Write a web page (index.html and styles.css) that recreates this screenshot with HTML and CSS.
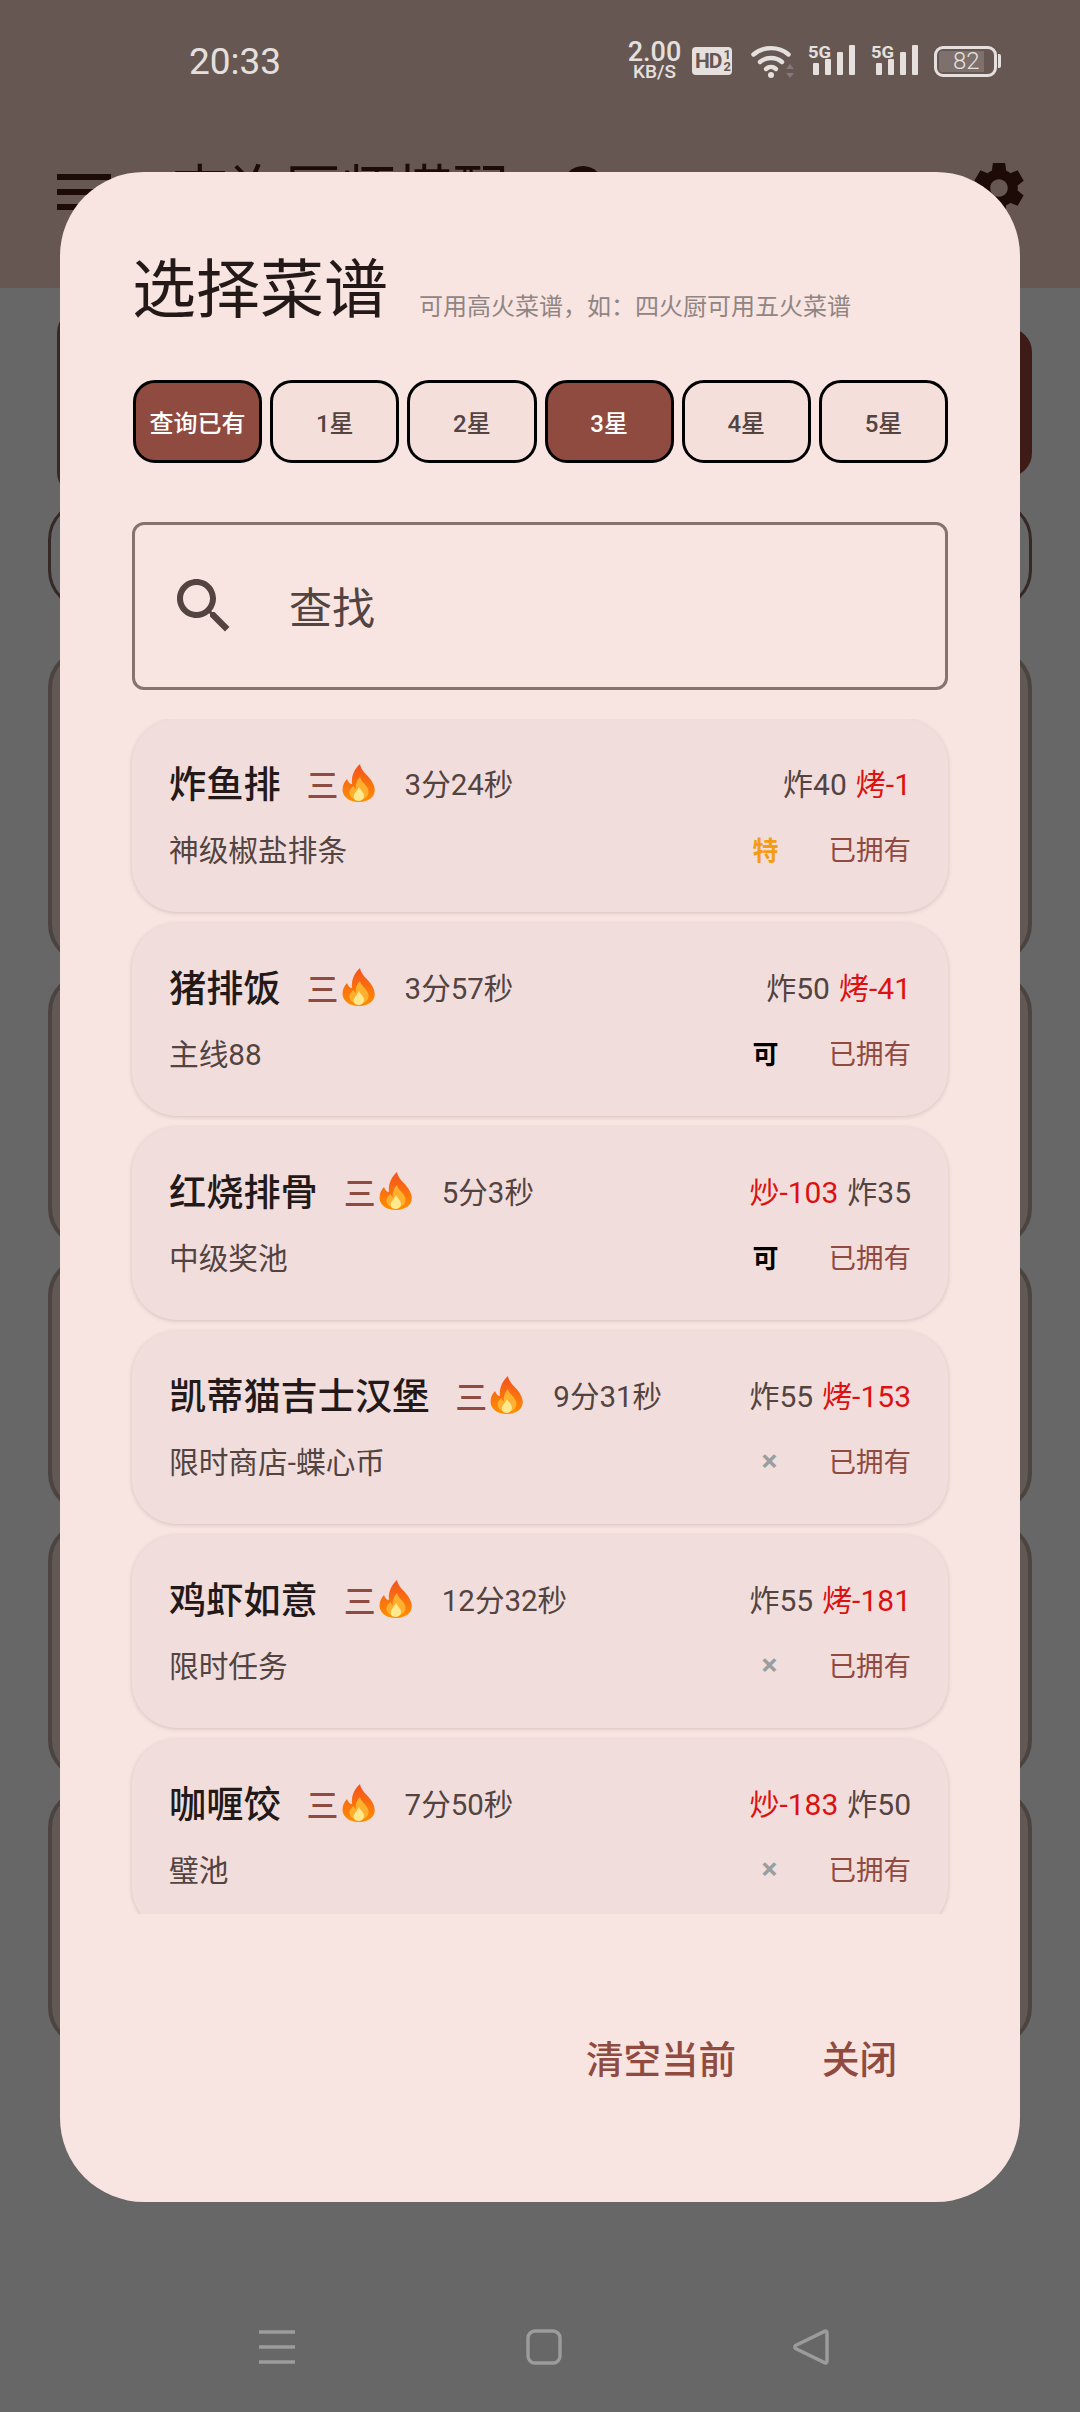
FILE: index.html
```html
<!DOCTYPE html>
<html lang="zh-CN">
<head>
  <meta charset="utf-8">
  <title>选择菜谱</title>
  <link rel="stylesheet" href="styles.css">
</head>
<body>

  <svg class="defs" width="0" height="0">
    <defs>
      <linearGradient id="flameOuter" x1="0" y1="0" x2="0" y2="1">
        <stop offset="0" stop-color="#f4511e"/>
        <stop offset="1" stop-color="#ff8f00"/>
      </linearGradient>
      <symbol id="flame" viewBox="0 0 34 38">
        <path fill="url(#flameOuter)" d="M18 0C19 7 25 10 29 16C33 22 34 27 31 32C28 36 22 38 17 38C11 38 5 36 2 31C-1 26 1 19 5 15C6 18 8 20 10 20C9 13 12 5 18 0Z"/>
        <path fill="#ffb02e" d="M18 13C19 18 24 20 26 25C28 30 24 36 17 36C10 36 6 31 8 26C9 24 10 23 12 22C12 24 13 25 14 25C13 21 15 16 18 13Z"/>
        <path fill="#ffe98f" d="M17 23C18 26 22 28 22 32C22 35 19 37 16.5 37C13 37 11 34 12 31C13 28 16 26 17 23Z"/>
      </symbol>
      <symbol id="signal" viewBox="0 0 48 34">
        <text x="0" y="13.5" font-family="Roboto" font-weight="700" font-size="17" textLength="23" lengthAdjust="spacingAndGlyphs" fill="#e5e0de">5G</text>
        <rect x="5" y="19" width="6" height="12" rx="1" fill="#e5e0de"/>
        <rect x="17" y="15" width="6" height="16" rx="1" fill="#e5e0de"/>
        <rect x="29" y="8" width="6" height="23" rx="1" fill="#e5e0de"/>
        <rect x="41" y="1" width="6" height="30" rx="1" fill="#e5e0de"/>
      </symbol>
    </defs>
  </svg>

  <div class="app">
    <header class="app-header">
      <div class="status-bar">
        <span class="clock">20:33</span>
        <div class="status-icons">
          <div class="net-speed"><span class="net-num">2.00</span><span class="net-unit">KB/S</span></div>
          <div class="hd-badge"><span>HD</span><span class="hd-frac">1<br>2</span></div>
          <svg class="wifi" viewBox="0 0 44 36" width="44" height="36">
            <g fill="none" stroke="#e5e0de" stroke-width="4.4" stroke-linecap="round">
              <path d="M2.5 11.5C12 3 28 3 37.5 11.5"/>
              <path d="M9 19C15 13.6 25 13.6 31 19"/>
              <path d="M15 26C18 23.4 22 23.4 25 26"/>
            </g>
            <circle cx="20" cy="32" r="3" fill="#e5e0de"/>
            <path d="M39 21l4 5h-8zM39 35l4-5h-8z" fill="#85797a"/>
          </svg>
          <svg class="signal" width="48" height="34"><use href="#signal"/></svg>
          <svg class="signal" width="48" height="34"><use href="#signal"/></svg>
          <div class="battery">
            <div class="battery-body"><span class="battery-level">82</span></div>
            <div class="battery-nub"></div>
          </div>
        </div>
      </div>
      <div class="title-bar">
        <svg class="menu-icon" viewBox="0 0 24 24" width="72" height="72"><path d="M3 18h18v-2H3v2zm0-5h18v-2H3v2zm0-5h18V6H3v2z"/></svg>
        <span class="app-title">查询厨师搭配</span>
        <span class="help-dot"></span>
        <svg class="gear-icon" viewBox="0 0 24 24" width="60" height="60"><path d="M19.44 12.99l-.01.02c.04-.33.08-.67.08-1.01 0-.34-.03-.66-.07-.99l.01.02 2.44-1.92-2.43-4.22-2.87 1.16.01.01c-.52-.4-1.09-.74-1.71-1h.01L14.44 2H9.57l-.44 3.07h.01c-.62.26-1.19.6-1.71 1l.01-.01-2.88-1.17-2.44 4.22 2.44 1.92.01-.02c-.04.33-.07.65-.07.99 0 .34.03.68.08 1.01l-.01-.02-2.1 1.65-.33.26 2.43 4.2 2.88-1.15-.02-.04c.53.41 1.1.75 1.73 1.01h-.03L9.58 22h4.85s.03-.18.06-.42l.38-2.65h-.01c.62-.26 1.2-.6 1.73-1.01l-.02.04 2.88 1.15 2.43-4.2s-.14-.12-.33-.26l-2.11-1.66zM12 15.5c-1.93 0-3.5-1.57-3.5-3.5s1.57-3.5 3.5-3.5 3.5 1.57 3.5 3.5-1.57 3.5-3.5 3.5z"/></svg>
      </div>
    </header>

    <!-- page behind the dialog, only its edges show -->
    <main class="behind">
      <div class="behind-top">
        <div class="behind-outline-btn"></div>
        <div class="behind-solid"></div>
      </div>
      <div class="behind-outline"></div>
      <div class="behind-card h316"></div>
      <div class="behind-card h276"></div>
      <div class="behind-card h257"></div>
      <div class="behind-card h259"></div>
      <div class="behind-card h259"></div>
    </main>

    <nav class="nav-bar">
      <svg viewBox="0 0 40 36" width="40" height="36"><path d="M2 3h36M2 18h36M2 33h36" fill="none" stroke="#9c9c9c" stroke-width="3.4"/></svg>
      <svg viewBox="0 0 40 36" width="40" height="36"><rect x="4" y="2" width="32" height="32" rx="7" fill="none" stroke="#9c9c9c" stroke-width="3.4"/></svg>
      <svg viewBox="0 0 40 36" width="40" height="36"><path d="M36 3.5v29a1.5 1.5 0 0 1-2.500 1.100L4.500 19.500a2 2 0 0 1 0-3L33.500 2.400A1.500 1.500 0 0 1 36 3.500z" fill="none" stroke="#9c9c9c" stroke-width="3.400" stroke-linejoin="round"/></svg>
    </nav>

    <section class="dialog">
      <div class="dialog-head">
        <h1 class="dialog-title">选择菜谱</h1>
        <span class="dialog-hint">可用高火菜谱，如：四火厨可用五火菜谱</span>
      </div>

      <div class="chips">
        <button class="chip chip-on">查询已有</button>
        <button class="chip">1星</button>
        <button class="chip">2星</button>
        <button class="chip chip-on">3星</button>
        <button class="chip">4星</button>
        <button class="chip">5星</button>
      </div>

      <div class="search-box">
        <svg class="search-icon" viewBox="0 0 24 24" width="72" height="72"><path d="M15.5 14h-.79l-.28-.27C15.41 12.59 16 11.11 16 9.5 16 5.91 13.09 3 9.5 3S3 5.91 3 9.5 5.91 16 9.5 16c1.61 0 3.09-.59 4.23-1.57l.27.28v.79l5 4.99L20.49 19l-4.99-5zm-6 0C7.01 14 5 11.99 5 9.5S7.01 5 9.5 5 14 7.01 14 9.5 11.99 14 9.5 14z"/></svg>
        <span class="search-text">查找</span>
      </div>

      <div class="recipe-list">
        <div class="recipe">
          <div class="recipe-row">
            <span class="recipe-name">炸鱼排</span>
            <span class="recipe-stars">三<svg class="flame" width="34" height="38"><use href="#flame"/></svg></span>
            <span class="recipe-time">3分24秒</span>
            <span class="recipe-skills"><span>炸40</span><span class="short">烤-1</span></span>
          </div>
          <div class="recipe-row recipe-row-sub">
            <span class="recipe-source">神级椒盐排条</span>
            <span class="rank rank-special">特</span>
            <span class="owned">已拥有</span>
          </div>
        </div>

        <div class="recipe">
          <div class="recipe-row">
            <span class="recipe-name">猪排饭</span>
            <span class="recipe-stars">三<svg class="flame" width="34" height="38"><use href="#flame"/></svg></span>
            <span class="recipe-time">3分57秒</span>
            <span class="recipe-skills"><span>炸50</span><span class="short">烤-41</span></span>
          </div>
          <div class="recipe-row recipe-row-sub">
            <span class="recipe-source">主线88</span>
            <span class="rank">可</span>
            <span class="owned">已拥有</span>
          </div>
        </div>

        <div class="recipe">
          <div class="recipe-row">
            <span class="recipe-name">红烧排骨</span>
            <span class="recipe-stars">三<svg class="flame" width="34" height="38"><use href="#flame"/></svg></span>
            <span class="recipe-time">5分3秒</span>
            <span class="recipe-skills"><span class="short">炒-103</span><span>炸35</span></span>
          </div>
          <div class="recipe-row recipe-row-sub">
            <span class="recipe-source">中级奖池</span>
            <span class="rank">可</span>
            <span class="owned">已拥有</span>
          </div>
        </div>

        <div class="recipe">
          <div class="recipe-row">
            <span class="recipe-name">凯蒂猫吉士汉堡</span>
            <span class="recipe-stars">三<svg class="flame" width="34" height="38"><use href="#flame"/></svg></span>
            <span class="recipe-time">9分31秒</span>
            <span class="recipe-skills"><span>炸55</span><span class="short">烤-153</span></span>
          </div>
          <div class="recipe-row recipe-row-sub">
            <span class="recipe-source">限时商店-蝶心币</span>
            <span class="rank rank-none">×</span>
            <span class="owned">已拥有</span>
          </div>
        </div>

        <div class="recipe">
          <div class="recipe-row">
            <span class="recipe-name">鸡虾如意</span>
            <span class="recipe-stars">三<svg class="flame" width="34" height="38"><use href="#flame"/></svg></span>
            <span class="recipe-time">12分32秒</span>
            <span class="recipe-skills"><span>炸55</span><span class="short">烤-181</span></span>
          </div>
          <div class="recipe-row recipe-row-sub">
            <span class="recipe-source">限时任务</span>
            <span class="rank rank-none">×</span>
            <span class="owned">已拥有</span>
          </div>
        </div>

        <div class="recipe">
          <div class="recipe-row">
            <span class="recipe-name">咖喱饺</span>
            <span class="recipe-stars">三<svg class="flame" width="34" height="38"><use href="#flame"/></svg></span>
            <span class="recipe-time">7分50秒</span>
            <span class="recipe-skills"><span class="short">炒-183</span><span>炸50</span></span>
          </div>
          <div class="recipe-row recipe-row-sub">
            <span class="recipe-source">璧池</span>
            <span class="rank rank-none">×</span>
            <span class="owned">已拥有</span>
          </div>
        </div>
      </div>

      <div class="dialog-actions">
        <button class="text-btn">清空当前</button>
        <button class="text-btn">关闭</button>
      </div>
    </section>
  </div>

</body>
</html>
```

FILE: styles.css
```css
* { box-sizing: border-box; }
html, body { margin: 0; padding: 0; }
body { width: 1080px; height: 2412px; overflow: hidden; background: #676767; font-family: Roboto, "Noto Sans CJK SC", sans-serif; color: #231918; }
.defs { position: absolute; }

.app { position: relative; width: 1080px; height: 2412px; display: flex; flex-direction: column; overflow: hidden; }

/* header behind the scrim */
.app-header { height: 288px; background: #665753; flex: none; }
.status-bar { height: 124px; display: flex; align-items: center; padding: 0 79px 0 189px; color: #e5e0de; }
.clock { font-size: 37px; line-height: 44px; }
.status-icons { margin-left: auto; margin-top: -2px; display: flex; align-items: center; }
.net-speed { width: 51px; display: flex; flex-direction: column; align-items: center; margin-right: 12px; font-weight: 500; }
.net-num { font-size: 27px; line-height: 21px; }
.net-unit { font-size: 19px; line-height: 17px; }
.hd-badge { width: 40px; height: 28px; margin-right: 19px; padding-left: 3px; background: #e5e0de; border-radius: 4px; color: #665753; display: flex; align-items: center; font-size: 21px; font-weight: 700; letter-spacing: -1px; }
.hd-frac { font-size: 13px; line-height: 12px; margin-left: 2px; letter-spacing: 0; }
.wifi { margin-right: 13px; }
.signal { margin-right: 15px; }
.battery { display: flex; align-items: center; }
.battery-body { width: 63px; height: 31px; border: 3px solid #e5e0de; border-radius: 9px; padding: 2px; }
.battery-level { display: block; width: 45px; height: 21px; background: #7d706d; border-radius: 3px 0 0 3px; padding-left: 14px; font-size: 24px; font-weight: 300; line-height: 21px; }
.battery-nub { width: 3px; height: 14px; margin-left: 1px; background: #e5e0de; border-radius: 0 2px 2px 0; }

.title-bar { margin-top: 32px; padding: 0 51px 0 48px; height: 72px; display: flex; align-items: center; color: #1d0b08; fill: #1d0b08; }
.app-title { margin-left: 52px; font-size: 56px; line-height: 72px; white-space: nowrap; }
.help-dot { width: 40px; height: 40px; margin: 0 0 12px 55px; background: #1d0b08; border-radius: 50%; }
.gear-icon { margin-left: auto; margin-top: -8px; }

/* page behind the dialog */
.behind { padding: 21px 48px 0; display: flex; flex-direction: column; gap: 8px; }
.behind-top { height: 187px; margin-left: 9px; display: flex; align-items: center; }
.behind-outline-btn { flex: 1; height: 187px; border: 3px solid #352925; border-radius: 24px; }
.behind-solid { flex: 1; height: 149px; background: #3e1b16; border-radius: 24px; }
.behind-outline { height: 110px; margin-top: -4px; margin-bottom: 30px; border: 3px solid #352825; border-radius: 40px; }
.behind-card { background: #625955; border: 4px solid #4c4440; border-radius: 40px; }
.h316 { height: 316px; }
.h276 { height: 276px; }
.h257 { height: 257px; }
.h259 { height: 259px; }

.nav-bar { margin-top: auto; padding: 0 0 47px 8px; display: flex; justify-content: center; gap: 227px; }

/* dialog */
.dialog { position: absolute; top: 172px; left: 60px; width: 960px; height: 2030px; padding: 81px 72px 0; background: #f8e4e1; border-radius: 84px; display: flex; flex-direction: column; }
.dialog-head { display: flex; align-items: flex-end; height: 76px; }
.dialog-title { margin: 2px 0 0; font-size: 64px; font-weight: 400; line-height: 76px; }
.dialog-hint { margin: 0 0 4px 31px; font-size: 24px; line-height: 36px; color: #8f8583; }

.chips { margin: 51px 0 0 1px; display: flex; gap: 8px; }
.chip { flex: 1; height: 83px; padding: 0; background: #f5dfdb; border: 3px solid #000; border-radius: 22px; color: #534341; font-family: inherit; font-size: 24px; font-weight: 500; }
.chip-on { background: #904b40; color: #fff; }

.search-box { margin-top: 59px; height: 168px; display: flex; align-items: center; padding-left: 33px; border: 3px solid #857370; border-radius: 12px; }
.search-icon { fill: #534341; flex: none; }
.search-text { margin: 5px 0 0 49px; font-size: 43px; line-height: 60px; color: #534341; }

.recipe-list { margin: 29px -12px 0; padding: 0 12px; height: 1195px; flex: none; overflow: hidden; display: flex; flex-direction: column; gap: 11px; }
.recipe { flex: none; height: 193px; padding: 38px 37px 0; background: #f1dedc; border-radius: 45px; box-shadow: 0 1px 4px rgba(80, 50, 45, .2); }
.recipe-row { display: flex; align-items: center; height: 52px; }
.recipe-row-sub { margin-top: 19px; height: 40px; }
.recipe-name { margin: 4px 26px 0 0; font-size: 37.200px; font-weight: 500; line-height: 52px; white-space: nowrap; }
.recipe-stars { display: flex; align-items: center; font-size: 32px; font-weight: 500; color: #904b40; }
.flame { margin-left: 3px; }
.recipe-time { margin: -2px 0 0 29px; font-size: 29.500px; color: #534341; }
.recipe-skills { margin: -2px 0 0 auto; display: flex; gap: 9px; font-size: 30px; color: #534341; }
.short { color: #dd1111; }

.recipe-source { font-size: 29.700px; color: #534341; }
.rank { margin-left: auto; width: 26px; text-align: center; font-size: 26px; font-weight: 700; color: #000; }
.rank-special { color: #f59c13; }
.rank-none { padding-left: 8px; font-size: 30px; color: #9a9e9e; }
.owned { margin-left: 50px; font-size: 27.500px; color: #904b40; }

.dialog-actions { margin-top: 121px; padding-right: 51px; display: flex; justify-content: flex-end; gap: 86px; }
.text-btn { padding: 0; height: 50px; background: none; border: none; color: #904b40; font-family: inherit; font-size: 37.500px; font-weight: 500; line-height: 50px; }
```
